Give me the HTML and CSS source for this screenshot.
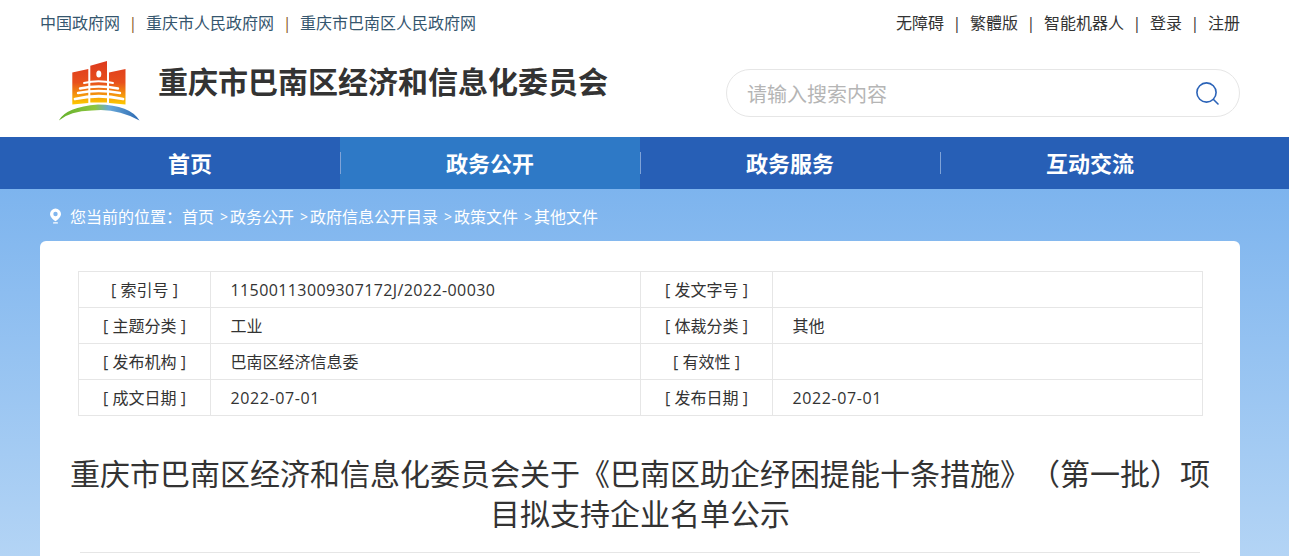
FILE: index.html
```html
<!DOCTYPE html>
<html lang="zh-CN">
<head>
<meta charset="utf-8">
<title>重庆市巴南区经济和信息化委员会</title>
<link rel="stylesheet" href="styles.css">
</head>
<body>
<div class="wrap topbar">
  <div class="links">
    <a>中国政府网</a><i>|</i><a>重庆市人民政府网</a><i>|</i><a>重庆市巴南区人民政府网</a>
  </div>
  <div class="links right">
    <a>无障碍</a><i>|</i><a>繁體版</a><i>|</i><a>智能机器人</a><i>|</i><a>登录</a><i>|</i><a>注册</a>
  </div>
</div>
<header class="wrap head">
  <div class="brand">
    <svg class="logo" width="90" height="70" viewBox="55 58 90 70" aria-hidden="true">
      <defs>
        <linearGradient id="wall" x1="0" y1="61" x2="0" y2="104" gradientUnits="userSpaceOnUse">
          <stop offset="0" stop-color="#dd3a1e"/>
          <stop offset=".5" stop-color="#e8501c"/>
          <stop offset="1" stop-color="#fdc800"/>
        </linearGradient>
        <linearGradient id="arc" x1="58" y1="0" x2="140" y2="0" gradientUnits="userSpaceOnUse">
          <stop offset="0" stop-color="#63b02c"/>
          <stop offset=".45" stop-color="#8cc63f"/>
          <stop offset=".62" stop-color="#6aa9d8"/>
          <stop offset="1" stop-color="#2a68b2"/>
        </linearGradient>
      </defs>
      <path fill="url(#wall)" d="M72.3 72.5 88.3 69V103L72.3 104.5ZM90.3 65.7 107 61V102.5H90.3ZM109 72.5 125.5 69V104.5L109 103Z"/>
      <path fill="#fff" d="M88.3 80H90.3V102.5H88.3ZM107 80H109V102.5H107Z" opacity="0"/>
      <ellipse cx="98.8" cy="74" rx="2.5" ry="3.6" fill="#fff"/>
      <g fill="none" stroke="#fff" stroke-linecap="round">
        <path stroke-width="2" d="M84 83Q98.5 79.5 113 83"/>
        <path stroke-width="2.4" d="M80 88.5Q98.5 84.5 118 88.5"/>
        <path stroke-width="2.4" d="M78 93Q98.5 89 120 93"/>
        <path stroke-width="2.8" d="M75 99Q98.5 93.5 123 99"/>
      </g>
      <path fill="url(#arc)" d="M58.8 120.5Q66 107 98 104.5Q130 105 139.5 120.5Q116 107.5 92 110.5Q70 111 58.8 120.5Z"/>
    </svg>
    <h1>重庆市巴南区经济和信息化委员会</h1>
  </div>
  <div class="search">
    <span class="placeholder">请输入搜索内容</span>
    <svg width="26" height="26" viewBox="0 0 26 26" aria-hidden="true">
      <circle cx="12.5" cy="12.5" r="9.6" fill="none" stroke="#2b63b8" stroke-width="1.6"/>
      <path d="M19.5 19.5 24 24" stroke="#2b63b8" stroke-width="1.6" stroke-linecap="round"/>
    </svg>
  </div>
</header>
<nav class="nav">
  <div class="wrap nav-in">
    <a class="nav-item first">首页</a>
    <a class="nav-item active">政务公开</a>
    <a class="nav-item">政务服务</a>
    <a class="nav-item">互动交流</a>
  </div>
</nav>
<main class="main">
  <div class="wrap crumb">
    <svg width="13" height="16" viewBox="0 0 13 16" aria-hidden="true">
      <path fill="#fff" fill-rule="evenodd" d="M6.5 0.5A5.6 5.6 0 0 1 12 6C12 9 8.5 12 6.5 13.2 4.5 12 1 9 1 6A5.6 5.6 0 0 1 6.5 0.5ZM6.5 3.8A2.2 2.2 0 1 0 6.5 8.2 2.2 2.2 0 1 0 6.5 3.8Z"/>
      <rect x="4" y="14.2" width="5" height="1.4" rx=".7" fill="#fff"/>
    </svg>
    <span class="here">您当前的位置：</span><a>首页</a><span class="gt">&gt;</span><a>政务公开</a><span class="gt">&gt;</span><a>政府信息公开目录</a><span class="gt">&gt;</span><a>政策文件</a><span class="gt">&gt;</span><a>其他文件</a>
  </div>
  <section class="wrap card">
    <table class="meta">
      <colgroup><col class="c1"><col class="c2"><col class="c3"><col class="c4"></colgroup>
      <tr><th>[ 索引号 ]</th><td class="num">11500113009307172J/2022-00030</td><th>[ 发文字号 ]</th><td></td></tr>
      <tr><th>[ 主题分类 ]</th><td>工业</td><th>[ 体裁分类 ]</th><td>其他</td></tr>
      <tr><th>[ 发布机构 ]</th><td>巴南区经济信息委</td><th>[ 有效性 ]</th><td></td></tr>
      <tr><th>[ 成文日期 ]</th><td class="num date">2022-07-01</td><th>[ 发布日期 ]</th><td class="num date">2022-07-01</td></tr>
    </table>
    <h2 class="title">重庆市巴南区经济和信息化委员会关于《巴南区助企纾困提能十条措施》（第一批）项目拟支持企业名单公示</h2>
    <div class="rule"></div>
  </section>
</main>
</body>
</html>
```
FILE: styles.css
```css
* { box-sizing: border-box; }
html, body { margin: 0; padding: 0; }
body {
  height: 556px;
  overflow: hidden;
  background: #fff;
  color: #333;
  font-family: "Open Sans", "Noto Sans CJK SC", sans-serif;
  font-size: 16px;
  text-spacing-trim: space-all;
}
h1, h2 { margin: 0; }
.wrap { width: 1200px; margin: 0 0 0 40px; }
.topbar {
  height: 46px;
  display: flex;
  justify-content: space-between;
  align-items: center;
  line-height: 22px;
}
.links { display: flex; color: #35566e; }
.links a { display: block; }
.links i { font-style: normal; width: 26px; text-align: center; color: #8a5a2a; }
.links.right { color: #333; }
.links.right i { color: #333; }
.head {
  height: 91px;
  display: flex;
  justify-content: space-between;
}
.brand { display: flex; align-items: flex-start; padding-left: 15px; }
.logo { margin-top: 12px; flex: none; }
.brand h1 {
  margin: 12px 0 0 13px;
  font-size: 30px;
  line-height: 48px;
  font-weight: 700;
  white-space: nowrap;
}
.search {
  width: 514px;
  height: 48px;
  margin-top: 23px;
  padding: 0 19px 0 20px;
  display: flex;
  justify-content: space-between;
  align-items: center;
  border: 1px solid #e6e6e6;
  border-radius: 24px;
  background: #fff;
}
.placeholder { font-size: 20px; color: #b5b5b5; }
.nav { height: 52px; background: #275fb6; }
.nav-in { display: flex; height: 52px; }
.nav-item {
  position: relative;
  width: 300px;
  padding-bottom: 2px;
  display: flex;
  align-items: center;
  justify-content: center;
  font-size: 22px;
  font-weight: 700;
  color: #fff;
}
.nav-item::before {
  content: "";
  position: absolute;
  left: 0;
  top: 15px;
  height: 22px;
  width: 1px;
  background: #7fa3d8;
}
.nav-item.first::before { display: none; }
.nav-item.active { background: #2e79c6; }
.main {
  height: 367px;
  background: linear-gradient(#7db4ee, #b3d4f5 367px);
}
.crumb {
  height: 52px;
  padding: 2px 0 0 9px;
  display: flex;
  align-items: center;
  color: #fff;
  white-space: nowrap;
}
.crumb svg { margin-right: 8px; flex: none; }
.gt { margin: 0 0 0 4px; font-size: 14px; width: 12px; text-align: center; }
.card {
  height: 340px;
  background: #fff;
  border-radius: 6px 6px 0 0;
  padding: 30px 37px 0 38px;
}
.meta {
  width: 1124px;
  table-layout: fixed;
  border-collapse: collapse;
}
.c1, .c3 { width: 132px; }
.c2 { width: 430px; }
.c4 { width: 430px; }
.meta th, .meta td {
  height: 36px;
  border: 1px solid #e6e6e6;
  font-weight: 400;
  padding: 0 0 2px;
}
.meta th { text-align: center; }
.meta td { padding-left: 19.5px; }
.meta .num { letter-spacing: .4px; padding-bottom: 0; }
.meta .date { letter-spacing: .6px; }
.title {
  margin: 38px 0 0 -10px;
  width: 1144px;
  font-size: 30px;
  line-height: 40px;
  font-weight: 400;
  text-align: center;
}
.rule { margin: 18px 3px 0 2px; height: 1px; background: #e6e6e6; }
```
